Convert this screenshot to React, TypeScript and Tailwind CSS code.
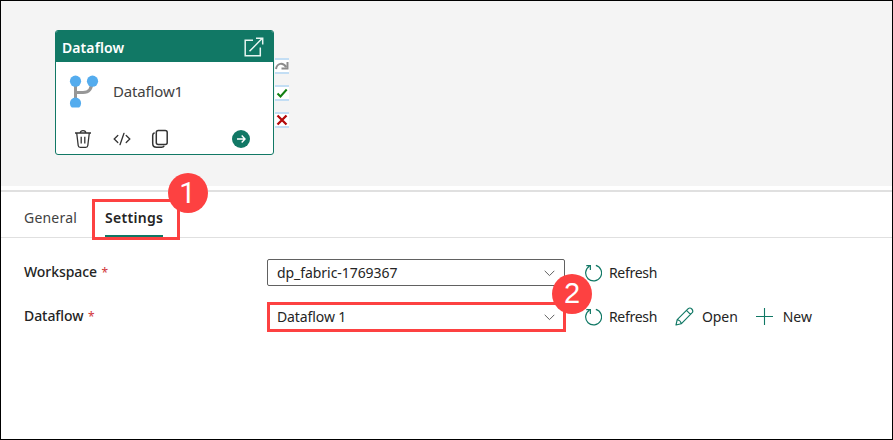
import type { ReactNode } from "react";

function Badge({ children, className }: { children: ReactNode; className: string }) {
  return (
    <span
      className={`absolute z-10 flex size-10 items-center justify-center rounded-full bg-[#fd4141] text-[29px] leading-none text-white ${className}`}
    >
      {children}
    </span>
  );
}

function ForkIcon() {
  return (
    <svg width="30" height="34" viewBox="0 0 30 34" fill="none">
      <path d="M6.5 6V28M6.5 17.5H14C20 17.5 23 13.5 23 6" stroke="#979797" strokeWidth="3" />
      <circle cx="6.5" cy="6.2" r="5.6" fill="#54acee" />
      <circle cx="23.5" cy="6.2" r="5.6" fill="#54acee" />
      <path d="M2.8 32.4A5.6 5.6 0 1 1 10.2 32.4Z" fill="#54acee" />
    </svg>
  );
}

function OpenIcon() {
  return (
    <svg width="20" height="20" viewBox="0 0 20 20" fill="none" stroke="#e8f5f1" strokeWidth="1.5">
      <path d="M9 3.3H1.2V18.7H16.3V10.5M5.5 14.3L18.3 1.3M12 1.2H18.7V7.5" />
    </svg>
  );
}

function TrashIcon() {
  return (
    <svg width="18" height="20" viewBox="0 0 18 20" fill="none" stroke="#333" strokeWidth="1.3">
      <path d="M1 4H17M6.2 4C6.2 .7 11.8 .7 11.8 4M2.7 4L4.2 16.5Q4.4 18.4 6.2 18.4H11.8Q13.6 18.4 13.8 16.5L15.3 4M7.2 7.7V14.5M10.8 7.7V14.5" />
    </svg>
  );
}

function CodeIcon() {
  return (
    <svg width="18" height="14" viewBox="0 0 18 14" fill="none" stroke="#333" strokeWidth="1.3" strokeLinecap="round">
      <path d="M4.8 3.5L1.2 7L4.8 10.5M13.2 3.5L16.8 7L13.2 10.5M11 1.3L7 12.7" />
    </svg>
  );
}

function CopyIcon() {
  return (
    <svg width="18" height="20" viewBox="0 0 18 20" fill="none" stroke="#333" strokeWidth="1.5">
      <rect x="5.3" y="1.5" width="10.9" height="14" rx="2" />
      <path d="M3.6 3.8C2.3 4.3 1.7 5 1.7 6.3V14.5Q1.7 18.3 5.5 18.3H10.5Q12.5 18.3 13.2 16.8" />
    </svg>
  );
}

function RefreshIcon() {
  return (
    <svg width="18" height="18" viewBox="0 0 18 18" fill="none" stroke="#117865" strokeWidth="1.2">
      <path d="M11.9 1.3A8 8 0 1 1 5.4 2.2M2.3 1.5H6.4V6" />
    </svg>
  );
}

function PencilIcon() {
  return (
    <svg width="19" height="19" viewBox="0 0 19 19" fill="none" stroke="#117865" strokeWidth="1.15" strokeLinejoin="round">
      <path d="M1 18L2.2 12.7L13.2 1.7Q15 .2 16.8 2Q18.6 4 17.2 5.7L6.2 16.8ZM11.5 3.4L15.5 7.4M2.2 12.7Q5.7 13.2 6.2 16.8" />
    </svg>
  );
}

function Chevron() {
  return (
    <svg className="mt-[2px]" width="11" height="7" viewBox="0 0 11 7" fill="none" stroke="#616161">
      <path d="M.7 .8L5.5 5.6L10.3 .8" />
    </svg>
  );
}

function Activity() {
  return (
    <div className="flex">
      <article className="flex h-[125px] w-[219px] flex-col overflow-hidden rounded-[3px] border border-[#117865] bg-white">
        <header className="flex h-[31px] shrink-0 items-center justify-between bg-[#117865] pr-[9px] pl-[6px] text-white">
          <span className="pt-px text-[14px] font-semibold tracking-[0.08px]">Dataflow</span>
          <OpenIcon />
        </header>
        <div className="flex h-[60px] items-center gap-[14px] pl-[13px]">
          <ForkIcon />
          <span className="-mt-[2px] text-[15px] tracking-[-0.15px] text-[#424242]">Dataflow1</span>
        </div>
        <footer className="flex items-center pt-[7px] pl-[18px]">
          <TrashIcon />
          <span className="ml-[21px]"><CodeIcon /></span>
          <span className="ml-[20px]"><CopyIcon /></span>
          <svg className="ml-[63px]" width="18" height="18" viewBox="0 0 18 18" fill="none">
            <circle cx="9" cy="9" r="9" fill="#117865" />
            <path d="M5 9H13M9.7 5.6L13 9L9.7 12.4" stroke="white" strokeWidth="1.4" />
          </svg>
        </footer>
      </article>
      <div className="flex flex-col gap-[11px] pt-[28px] pl-px">
        <span className="h-4 w-[14px] border-y-2 border-[#c3def4] bg-white">
          <svg width="14" height="12" viewBox="0 0 14 12" fill="none" stroke="#8c8c8c" strokeWidth="2">
            <path d="M1 9C2 3 8 2 11 7M12.5 2V8.5H6.5" />
          </svg>
        </span>
        <span className="h-4 w-[14px] border-y-2 border-[#c3def4] bg-white">
          <svg width="14" height="12" viewBox="0 0 14 12" fill="none" stroke="#128012" strokeWidth="2">
            <path d="M2.5 6.5L5.5 9.5L11.7 2.5" />
          </svg>
        </span>
        <span className="h-4 w-[14px] border-y-2 border-[#c3def4] bg-white">
          <svg width="14" height="12" viewBox="0 0 14 12" fill="none" stroke="#b40a0a" strokeWidth="2.3">
            <path d="M2.5 1.5L11.5 10.5M11.5 1.5L2.5 10.5" />
          </svg>
        </span>
      </div>
    </div>
  );
}

function Label({ children }: { children: ReactNode }) {
  return (
    <label className="-mt-[2px] w-[243px] shrink-0 text-[14px] font-medium tracking-[-0.07px]">
      {children} <span className="ml-px text-[12px] font-normal text-[#d13438]">*</span>
    </label>
  );
}

function RefreshAction() {
  return (
    <button className="flex w-[73px] items-center gap-[7px] text-[14px] tracking-[-0.3px]">
      <RefreshIcon />
      Refresh
    </button>
  );
}

export default function App() {
  return (
    <main className="flex h-[440px] w-[893px] flex-col border border-black bg-white font-['Noto_Sans',sans-serif] text-[14px] text-[#242424]">
      <section className="h-[185px] shrink-0 bg-[#f4f4f4] pt-[29px] pl-[54px]">
        <Activity />
      </section>
      <div className="mt-[4px] h-[2px] shrink-0 bg-[#e0e0e0]" />
      <nav className="flex h-[46px] shrink-0 border-b border-[#e0e0e0] pt-[7px] pl-[23px]">
        <button className="h-[37px] w-[68px] text-left tracking-[0.2px] text-[#424242]">General</button>
        <div className="relative flex h-[41px] w-[88px] shrink-0 border-3 border-[#fd4141] pl-[10px]">
          <button className="flex h-[35px] w-[58px] items-center border-b-2 border-[#117865] pb-[3px] font-semibold tracking-[0.3px]">Settings</button>
          <Badge className="-top-[29px] left-[73px] pr-px font-['Roboto',sans-serif]">1</Badge>
        </div>
      </nav>
      <section className="flex flex-col pt-[19px] pl-[23px]">
        <div className="flex h-[31px] items-center">
          <Label>Workspace</Label>
          <div className="flex h-[27px] w-[298px] items-center justify-between rounded-[2px] border border-[#616161] pr-[9px] pl-[9px]">
            <span className="tracking-[-0.06px]">dp_fabric-1769367</span>
            <Chevron />
          </div>
          <span className="ml-[19px]"><RefreshAction /></span>
        </div>
        <div className="mt-[13px] flex h-[31px] items-center">
          <Label>Dataflow</Label>
          <div className="relative flex h-[30px] w-[299px] items-center justify-between border-3 border-[#fd4141] pr-[8px] pl-[7px]">
            <span className="tracking-[-0.1px]">Dataflow 1</span>
            <Chevron />
            <Badge className="-top-[31px] left-[282px] font-['Liberation_Sans',sans-serif]">2</Badge>
          </div>
          <span className="ml-[18px]"><RefreshAction /></span>
          <button className="ml-[18px] flex items-center gap-[8px] tracking-[-0.1px]">
            <PencilIcon />
            Open
          </button>
          <button className="ml-[18px] flex items-center gap-[10px] tracking-[0px]">
            <svg width="17" height="17" viewBox="0 0 17 17" stroke="#117865" strokeWidth="1.1">
              <path d="M8.5 0V17M0 8.5H17" />
            </svg>
            New
          </button>
        </div>
      </section>
    </main>
  );
}
